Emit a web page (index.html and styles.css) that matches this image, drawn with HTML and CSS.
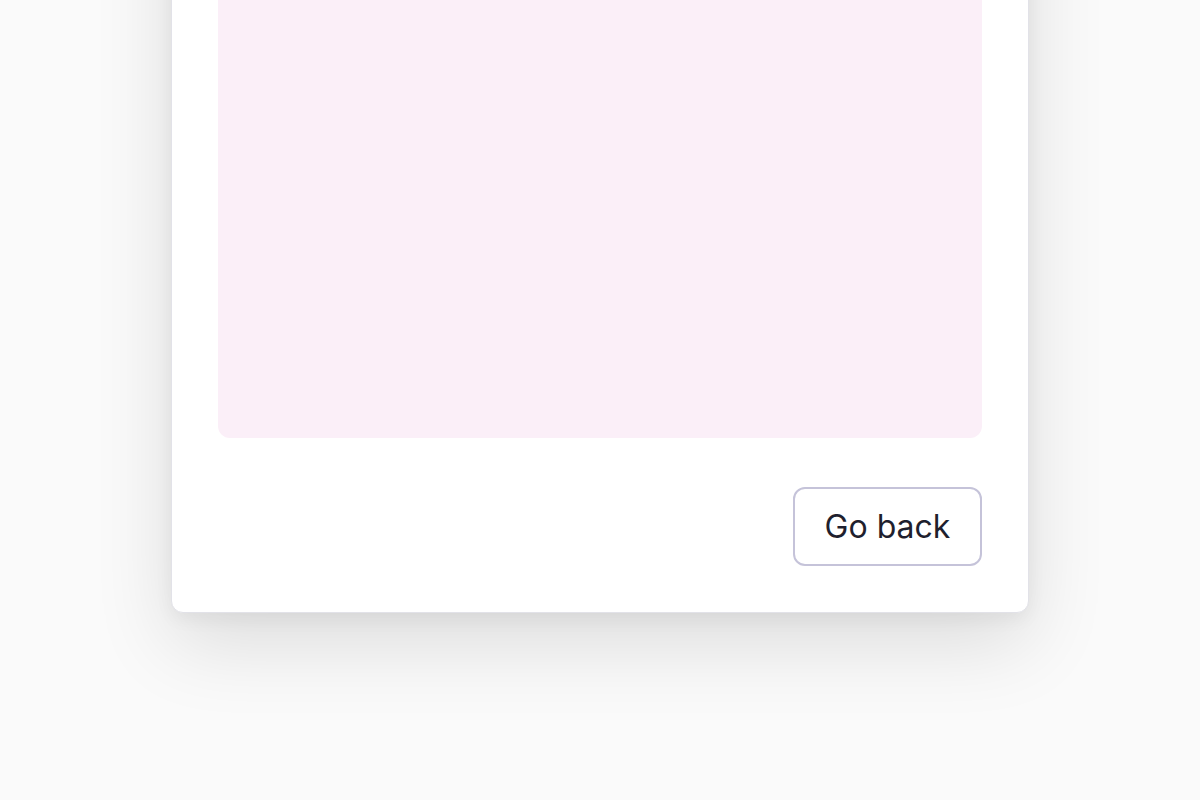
FILE: index.html
```html
<!DOCTYPE html>
<html lang="en">
<head>
    <meta charset="UTF-8">
    <meta name="viewport" content="width=device-width, initial-scale=1.0">
    <title>Preview</title>
    <link rel="stylesheet" href="styles.css">
</head>
<body>
    <div class="stage">
        <div class="card">
            <div class="preview"></div>
            <div class="actions">
                <button class="btn-back" type="button">Go back</button>
            </div>
        </div>
    </div>
</body>
</html>
```
FILE: styles.css
```css
  html, body {
      height: 100%;
  }

  body {
      font-family: 'Inter', 'Noto Sans', sans-serif;
      background-color: #fafafa;
      color: #1f1f2e;
      margin: 0;
      overflow: hidden;
  }

  .stage {
      height: 800px;
      display: flex;
      flex-direction: column;
      justify-content: flex-end;
      align-items: center;
      padding-bottom: 187px;
      box-sizing: border-box;
  }

  .card {
      flex-shrink: 0;
      width: 858px;
      background-color: #ffffff;
      border: 1px solid #e2e2e8;
      border-radius: 12px;
      padding: 46px 46px 46px;
      box-sizing: border-box;
      box-shadow: 0 30px 80px rgba(0, 0, 0, 0.12), 0 6px 18px rgba(0, 0, 0, 0.05);
  }

  .preview {
      height: 900px;
      background-color: #fbeff8;
      border-radius: 12px;
  }

  .actions {
      display: flex;
      justify-content: flex-end;
      margin-top: 49px;
  }

  .btn-back {
      font-family: inherit;
      font-size: 32px;
      color: #1f1f2e;
      background-color: #ffffff;
      border: 2px solid #c5c3d9;
      border-radius: 12px;
      width: 189px;
      height: 79px;
      cursor: pointer;
  }
```
